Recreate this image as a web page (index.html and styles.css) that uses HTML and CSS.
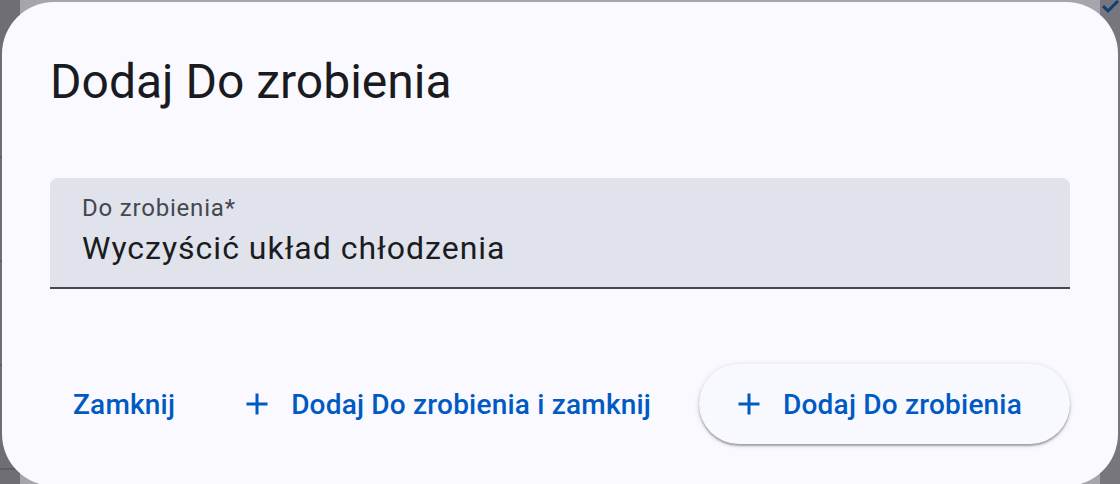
FILE: index.html
```html
<!DOCTYPE html>
<html lang="pl">
<head>
<meta charset="utf-8">
<title>Dodaj Do zrobienia</title>
<link rel="stylesheet" href="styles.css">
</head>
<body>
<div class="app">
  <div class="rail">
    <div class="rail-row"></div><div class="rail-row"></div><div class="rail-row"></div><div class="rail-row"></div>
  </div>
  <div class="main"></div>
  <div class="side">
    <svg class="side-check" width="20" height="14" viewBox="0 0 20 14"><path d="M2 6l5 5L17 1" fill="none" stroke="#0b3f7a" stroke-width="3"/></svg>
  </div>
</div>
<div class="dialog" role="dialog">
  <h1 class="title">Dodaj Do zrobienia</h1>
  <div class="field">
    <label class="field-label">Do zrobienia*</label>
    <div class="field-value">Wyczyścić układ chłodzenia</div>
  </div>
  <div class="actions">
    <button class="btn btn-text">Zamknij</button>
    <button class="btn btn-text btn-icon">
      <svg class="ic" viewBox="0 0 24 24"><path d="M19 13h-6v6h-2v-6H5v-2h6V5h2v6h6v2z"/></svg>
      Dodaj Do zrobienia i zamknij
    </button>
    <button class="btn btn-elevated">
      <svg class="ic" viewBox="0 0 24 24"><path d="M19 13h-6v6h-2v-6H5v-2h6V5h2v6h6v2z"/></svg>
      Dodaj Do zrobienia
    </button>
  </div>
</div>
</body>
</html>
```

FILE: styles.css
```css
html, body {
  margin: 0;
  padding: 0;
  width: 1120px;
  height: 484px;
  overflow: hidden;
  font-family: Roboto, "Noto Sans", sans-serif;
}

.app {
  display: flex;
  width: 1120px;
  height: 484px;
  background: #a6a5ab;
}

.rail {
  width: 20px;
  background: #6f6e74;
  display: flex;
  flex-direction: column;
  gap: 102px;
  padding-top: 156px;
  box-sizing: border-box;
}

.rail-row {
  height: 2px;
  background: #5e5d63;
}

.main {
  flex: 1;
}

.side {
  width: 20px;
  background: #77767c;
  position: relative;
}

.side-check {
  position: absolute;
  left: 1px;
  top: 0;
}

.dialog {
  position: absolute;
  left: 2px;
  top: 2px;
  width: 1116px;
  height: 484px;
  box-sizing: border-box;
  padding: 48px;
  background: #f9f9ff;
  border-radius: 52px;
}

.title {
  margin: 0;
  font-size: 48px;
  line-height: 64px;
  font-weight: 400;
  color: #1a1b20;
}

.field {
  margin-top: 64px;
  height: 111px;
  box-sizing: border-box;
  background: #e0e2ec;
  border-radius: 8px 8px 0 0;
  border-bottom: 2px solid #44474e;
  padding: 14px 32px 0;
  display: flex;
  flex-direction: column;
}

.field-label {
  font-size: 24px;
  line-height: 32px;
  letter-spacing: 0.8px;
  color: #44474f;
}

.field-value {
  font-size: 32px;
  line-height: 48px;
  color: #1a1c20;
  letter-spacing: 1px;
}

.actions {
  margin-top: 75px;
  display: flex;
  justify-content: flex-end;
  gap: 16px;
}

.btn {
  flex: none;
  white-space: nowrap;
  height: 80px;
  border: none;
  border-radius: 40px;
  background: transparent;
  font-family: Roboto, "Noto Sans", sans-serif;
  font-size: 28px;
  font-weight: 500;
  letter-spacing: 0.2px;
  color: #005ac1;
  display: flex;
  align-items: center;
  gap: 16px;
  padding: 0 24px;
  cursor: pointer;
}

.btn-icon {
  padding: 0 32px 0 24px;
}

.btn-elevated {
  padding: 0 48px 0 32px;
  background: #f8f8ff;
  box-shadow: 0 2px 2px rgba(0, 0, 0, 0.3), 0 1px 5px 1px rgba(0, 0, 0, 0.1);
}

.ic {
  width: 36px;
  height: 36px;
  fill: #005ac1;
  flex: none;
}
```
